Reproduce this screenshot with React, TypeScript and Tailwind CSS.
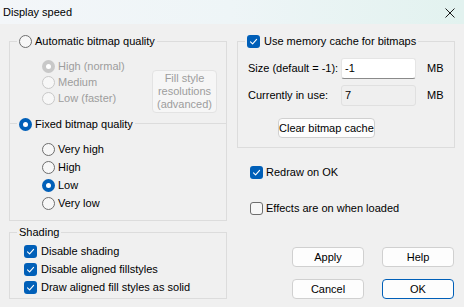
import React from 'react';

const Radio: React.FC<{ checked?: boolean; disabled?: boolean }> = ({ checked, disabled }) => {
  if (checked) {
    return (
      <span
        className={`flex h-[13px] w-[13px] shrink-0 items-center justify-center rounded-full ${
          disabled ? 'bg-[#c8c8c8]' : 'bg-[#005fb8]'
        }`}
      >
        <span className="h-[5px] w-[5px] rounded-full bg-white" />
      </span>
    );
  }
  return (
    <span
      className={`h-[13px] w-[13px] shrink-0 rounded-full border bg-[#f7f7f7] ${
        disabled ? 'border-[#c8c8c8]' : 'border-[#6e6e6e]'
      }`}
    />
  );
};

const Check: React.FC<{ checked?: boolean }> = ({ checked }) =>
  checked ? (
    <span className="flex h-[13px] w-[13px] shrink-0 items-center justify-center rounded-[3px] bg-[#005fb8]">
      <svg width="13" height="13" viewBox="0 0 13 13" fill="none">
        <path d="M3.5 6.8 L5.6 8.8 L9.6 4.4" stroke="white" strokeWidth="1.1" strokeLinecap="round" strokeLinejoin="round" />
      </svg>
    </span>
  ) : (
    <span className="h-[13px] w-[13px] shrink-0 rounded-[3px] border border-[#6e6e6e] bg-[#f7f7f7]" />
  );

const Button: React.FC<{ label: string; primary?: boolean }> = ({ label, primary }) => (
  <button
    className={`flex h-[20px] items-center justify-center rounded-[4px] border bg-[#fdfdfd] text-black ${
      primary ? 'border-[#005fb8]' : 'border-[#d0d0d0]'
    }`}
  >
    {label}
  </button>
);

const App: React.FC = () => {
  const fixed = ['Very high', 'High', 'Low', 'Very low'];

  return (
    <div className="h-[307px] w-[464px] overflow-hidden bg-[#f0f0f0] font-['Liberation_Sans',Arial,sans-serif] text-[11px] leading-none text-black">
      {/* title bar */}
      <div className="flex h-[24px] items-center justify-between bg-gradient-to-r from-[#f3f6f9] via-[#eef5f7] to-[#e2f2ef] pl-[3px] pr-[9px]">
        <span className="text-[11px]">Display speed</span>
        <svg width="10" height="10" viewBox="0 0 10 10" className="mt-[1px]">
          <path d="M0.5 0.5 L9.5 9.5 M9.5 0.5 L0.5 9.5" stroke="#1a1a1a" strokeWidth="1" />
        </svg>
      </div>

      <div className="grid grid-cols-[218px_218px] gap-x-[10px] px-[9px] pt-[17px]">
        {/* left column */}
        <div className="flex flex-col">
          <div className="relative h-[82px] border-x border-t border-[#dcdcdc]">
            <div className="absolute left-[7px] top-[-8px] flex h-[15px] items-center gap-[3px] bg-[#f0f0f0] px-[2px]">
              <Radio />
              <span>Automatic bitmap quality</span>
            </div>
            <div className="flex pt-[16px]">
              <div className="flex flex-col pl-[32px] text-[#9d9d9d]">
                {['High (normal)', 'Medium', 'Low (faster)'].map((t, i) => (
                  <div key={t} className="flex h-[16px] items-center gap-[3px]">
                    <Radio checked={i === 0} disabled />
                    <span>{t}</span>
                  </div>
                ))}
              </div>
              <div className="ml-auto mr-[9px] mt-[12px] flex h-[43px] w-[65px] flex-col items-center justify-center rounded-[4px] border border-[#e3e3e3] bg-[#f6f6f6] text-center leading-[13px] text-[#9d9d9d]">
                <span>Fill style</span>
                <span>resolutions</span>
                <span>(advanced)</span>
              </div>
            </div>
          </div>

          <div className="relative h-[98px] border border-[#dcdcdc]">
            <div className="absolute left-[7px] top-[-7px] flex h-[15px] items-center gap-[3px] bg-[#f0f0f0] px-[2px]">
              <Radio checked />
              <span>Fixed bitmap quality</span>
            </div>
            <div className="flex flex-col pl-[32px] pt-[16px]">
              {fixed.map((t) => (
                <div key={t} className="flex h-[18px] items-center gap-[3px]">
                  <Radio checked={t === 'Low'} />
                  <span>{t}</span>
                </div>
              ))}
            </div>
          </div>

          <div className="relative mt-[11px] h-[67px] border border-[#dcdcdc]">
            <div className="absolute left-[7px] top-[-8px] flex h-[15px] items-center bg-[#f0f0f0] px-[2px]">
              <span>Shading</span>
            </div>
            <div className="flex flex-col pl-[14px] pt-[9px]">
              {['Disable shading', 'Disable aligned fillstyles', 'Draw aligned fill styles as solid'].map((t) => (
                <div key={t} className="flex h-[18px] items-center gap-[4px]">
                  <Check checked />
                  <span>{t}</span>
                </div>
              ))}
            </div>
          </div>
        </div>

        {/* right column */}
        <div className="flex flex-col">
          <div className="relative h-[107px] border border-[#dcdcdc]">
            <div className="absolute left-[7px] top-[-8px] flex h-[15px] items-center gap-[4px] bg-[#f0f0f0] px-[2px]">
              <Check checked />
              <span>Use memory cache for bitmaps</span>
            </div>
            <div className="flex flex-col pt-[16px]">
              <div className="flex h-[21px] items-center">
                <span className="w-[103px] pl-[10px]">Size (default = -1):</span>
                <div className="flex h-[21px] w-[75px] items-center rounded-[3px] border border-[#e5e5e5] border-b-[#8a8a8a] bg-white pl-[3px]">
                  -1
                </div>
                <span className="ml-[11px]">MB</span>
              </div>
              <div className="mt-[6px] flex h-[21px] items-center">
                <span className="w-[103px] pl-[10px]">Currently in use:</span>
                <div className="flex h-[21px] w-[75px] items-center rounded-[3px] border border-[#e0e0e0] bg-[#efefef] pl-[3px]">
                  7
                </div>
                <span className="ml-[11px]">MB</span>
              </div>
              <div className="ml-[40px] mt-[12px] w-[138px]">
                <Button label="Clear bitmap cache" />
              </div>
            </div>
          </div>

          <div className="ml-[13px] mt-[16px] flex h-[16px] items-center gap-[3px]">
            <Check checked />
            <span>Redraw on OK</span>
          </div>
          <div className="ml-[13px] mt-[20px] flex h-[16px] items-center gap-[3px]">
            <Check />
            <span>Effects are on when loaded</span>
          </div>

          <div className="mt-[31px] grid grid-cols-[72px_72px] justify-end gap-x-[18px] gap-y-[12px] pr-[1px]">
            <Button label="Apply" />
            <Button label="Help" />
            <Button label="Cancel" />
            <Button label="OK" primary />
          </div>
        </div>
      </div>
    </div>
  );
};

export default App;
